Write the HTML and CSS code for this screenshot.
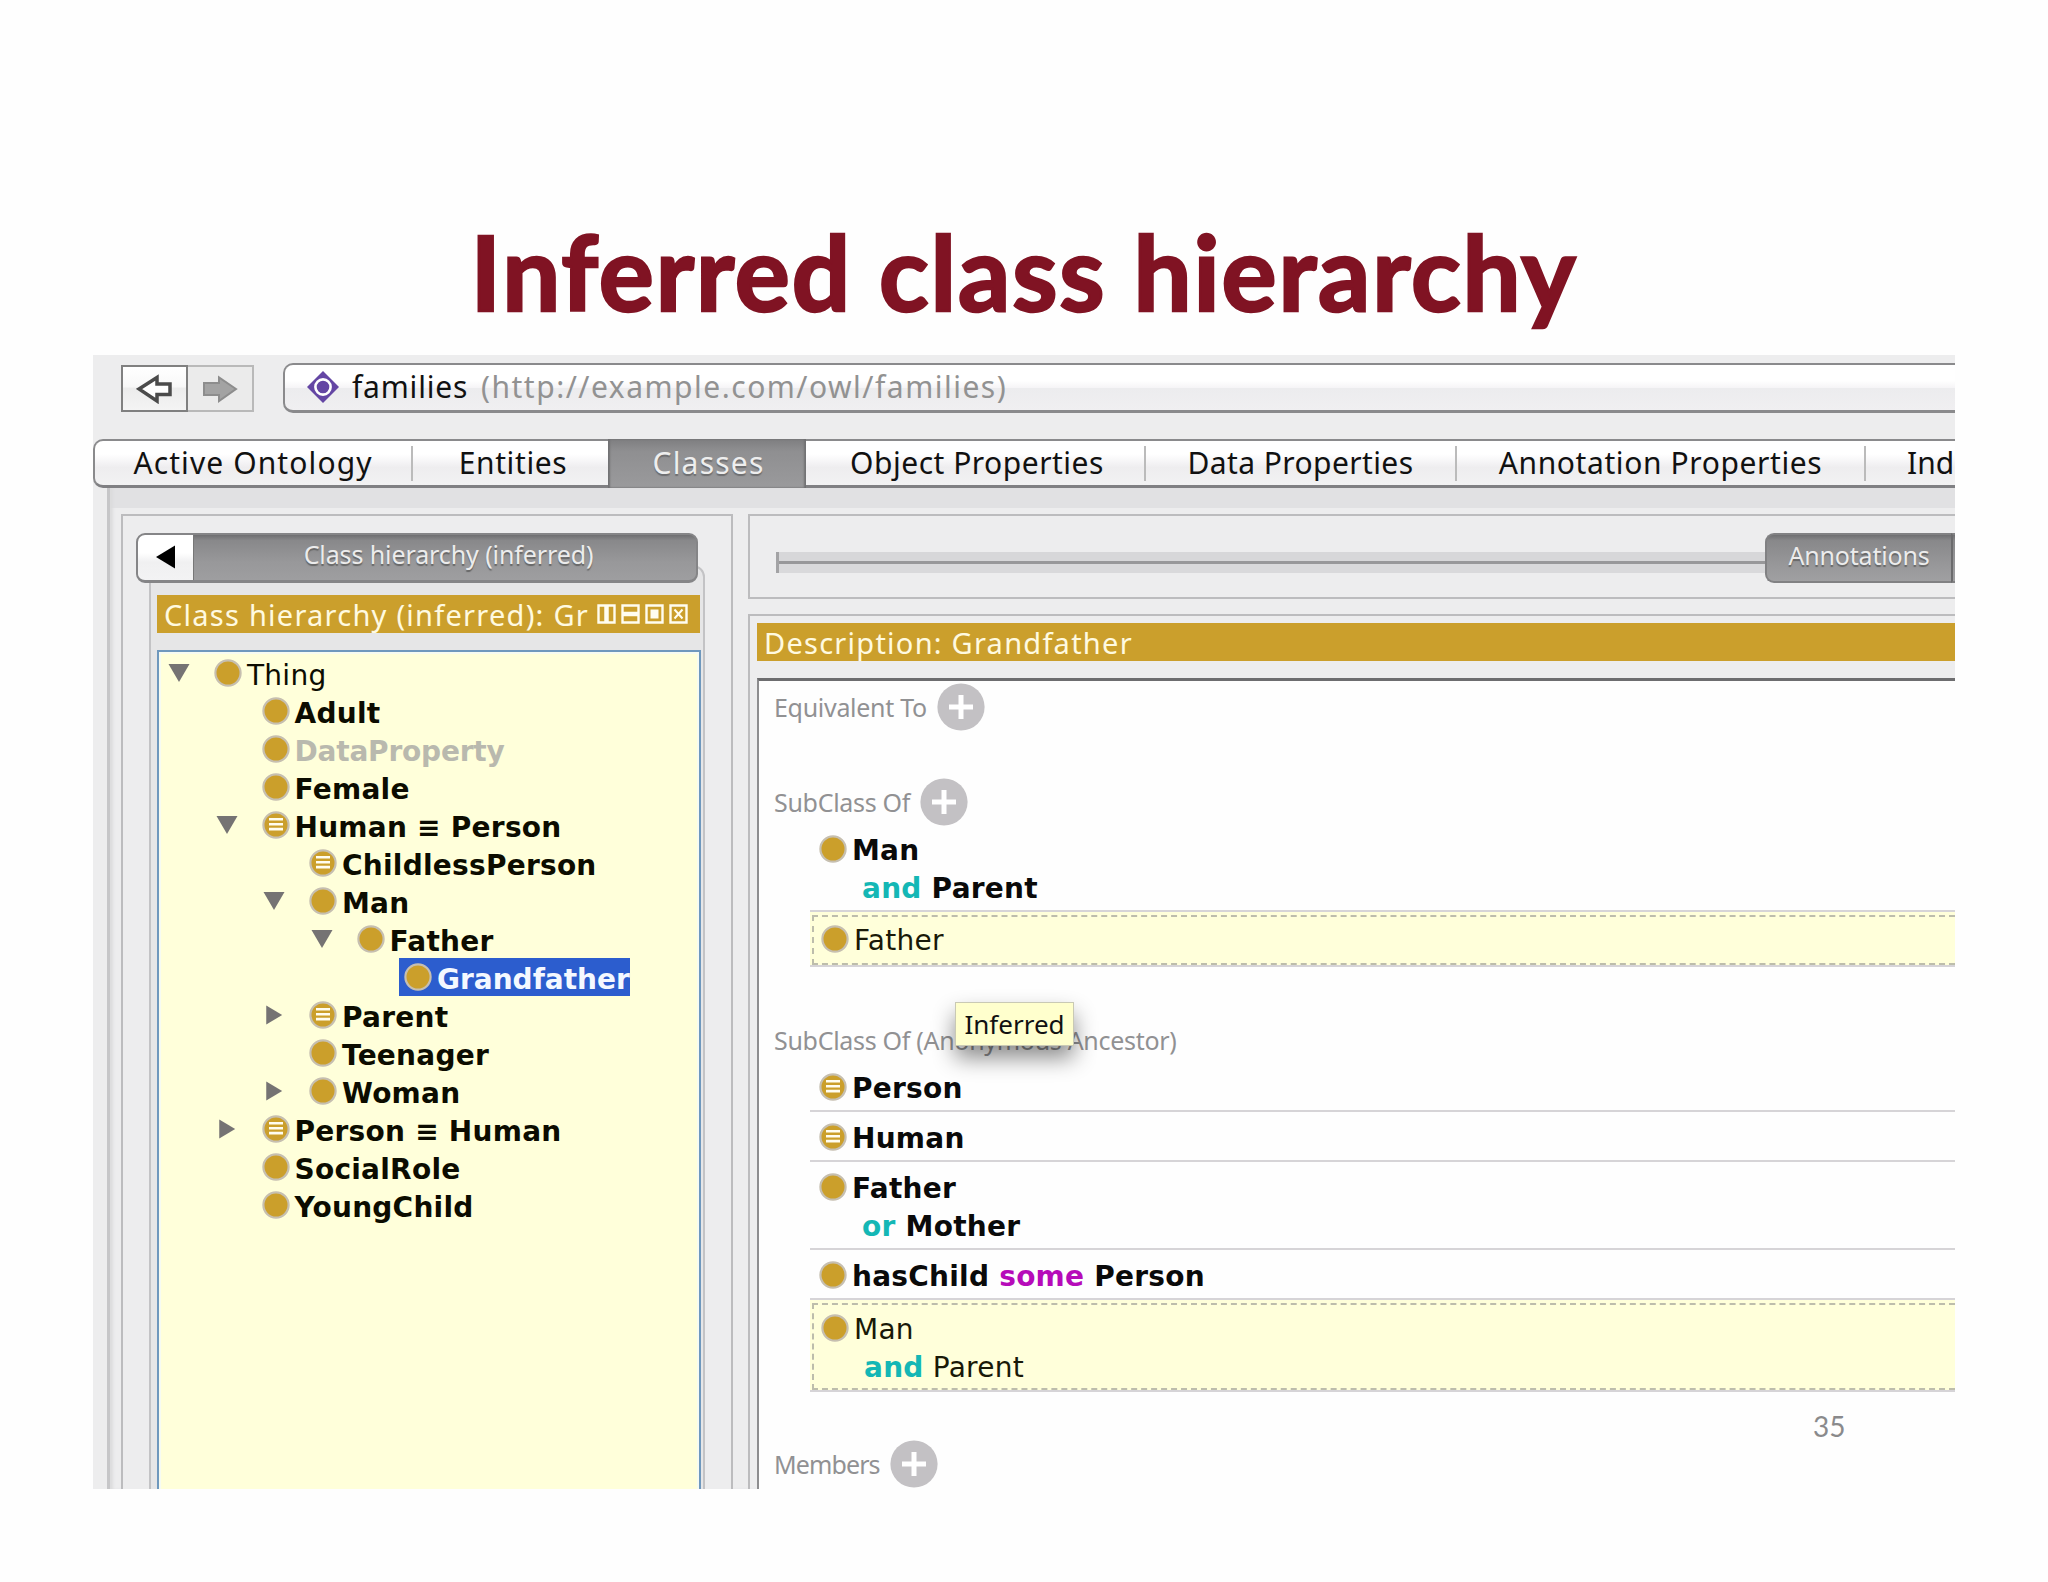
FILE: index.html
```html
<!DOCTYPE html>
<html lang="en">
<head>
<meta charset="utf-8">
<title>Inferred class hierarchy</title>
<link rel="stylesheet" href="styles.css">
</head>
<body>
<svg class="defs" aria-hidden="true">
  <symbol id="cls" viewBox="0 0 28 28"><circle cx="14" cy="14" r="12.6" fill="#cb9f2b" stroke="#c6bfb0" stroke-width="2.2"/></symbol>
  <symbol id="eqv" viewBox="0 0 28 28"><circle cx="14" cy="14" r="12.6" fill="#cb9f2b" stroke="#c6bfb0" stroke-width="2.2"/><path d="M7 8.3h14M7 13.2h14M7 18.1h14" stroke="#fffdf0" stroke-width="2.6"/></symbol>
  <symbol id="open" viewBox="0 0 22 20"><path d="M0.5 1h21L11 19z" fill="#757373"/></symbol>
  <symbol id="shut" viewBox="0 0 22 22"><path d="M2.5 0.5v21L20 11z" fill="#757373"/></symbol>
  <symbol id="plus" viewBox="0 0 48 48"><circle cx="24" cy="24" r="23.6" fill="#c3c1c4"/><path d="M24 12v24M12 24h24" stroke="#fff" stroke-width="5"/></symbol>
</svg>
<main class="slide">
  <h1 class="title">Inferred class hierarchy</h1>
  <section class="shot">
    <div class="toolbar">
      <div class="nav">
        <span class="nav-btn back"><svg width="38" height="30" viewBox="0 0 38 30"><path d="M3 15L21 3.500V10H34V20.500H21V27z" fill="#fff" stroke="#4b4b4b" stroke-width="3.500"/></svg></span>
        <span class="nav-btn fwd"><svg width="38" height="30" viewBox="0 0 38 30"><path d="M35 15L18 3.500V9H3V21H18V27z" fill="#a3a3a3" stroke="#8d8d8d" stroke-width="2"/></svg></span>
      </div>
      <div class="address">
        <svg class="gem" width="34" height="34" viewBox="0 0 34 34"><path d="M17 1L33 17L17 33L1 17z" fill="#6446a4"/><circle cx="17" cy="17" r="7.600" fill="none" stroke="#fff" stroke-width="2.600"/></svg>
        <span class="onto">families</span><span class="iri">(http://example.com/owl/families)</span>
      </div>
    </div>
    <nav class="tabs">
      <span class="tab t1">Active Ontology</span><i class="sep"></i>
      <span class="tab t2">Entities</span>
      <span class="tab t3 on">Classes</span>
      <span class="tab t4">Object Properties</span><i class="sep"></i>
      <span class="tab t5">Data Properties</span><i class="sep"></i>
      <span class="tab t6">Annotation Properties</span><i class="sep"></i>
      <span class="tab t7">Ind</span>
    </nav>
    <div class="workspace">
      <section class="left">
        <div class="seg">
          <span class="seg-back"><svg width="20" height="24" viewBox="0 0 20 24"><path d="M0 12L19 0.500v23z" fill="#000"/></svg></span>
          <span class="seg-label">Class hierarchy (inferred)</span>
        </div>
        <div class="frame">
          <div class="bar">
            <span class="bar-text">Class hierarchy (inferred): Gr</span>
            <svg class="ctl" width="92" height="20" viewBox="0 0 92 20" fill="none" stroke="#fffdf0" stroke-width="2.400">
              <path d="M1.500 1.500h16v17h-16zM25.500 1.500h16v17h-16zM49.500 1.500h16v17h-16zM73.500 1.500h16v17h-16z"/>
              <path d="M9.500 1v18M25 10h17" stroke-width="4.500"/><path d="M53.500 5.500h8v9h-8z" fill="#fffdf0" stroke="none"/><path d="M77.500 5.500l8 9M85.500 5.500l-8 9" stroke-width="2"/>
            </svg>
          </div>
          <div class="tree">
            <div class="row l0"><svg class="tw"><use href="#open"/></svg><span class="node plain"><svg class="ic"><use href="#cls"/></svg><b>Thing</b></span></div>
            <div class="row l1"><i class="tw"></i><span class="node"><svg class="ic"><use href="#cls"/></svg><b>Adult</b></span></div>
            <div class="row l1"><i class="tw"></i><span class="node dim"><svg class="ic"><use href="#cls"/></svg><b>DataProperty</b></span></div>
            <div class="row l1"><i class="tw"></i><span class="node"><svg class="ic"><use href="#cls"/></svg><b>Female</b></span></div>
            <div class="row l1"><svg class="tw"><use href="#open"/></svg><span class="node"><svg class="ic"><use href="#eqv"/></svg><b>Human ≡ Person</b></span></div>
            <div class="row l2"><i class="tw"></i><span class="node"><svg class="ic"><use href="#eqv"/></svg><b>ChildlessPerson</b></span></div>
            <div class="row l2"><svg class="tw"><use href="#open"/></svg><span class="node"><svg class="ic"><use href="#cls"/></svg><b>Man</b></span></div>
            <div class="row l3"><svg class="tw"><use href="#open"/></svg><span class="node"><svg class="ic"><use href="#cls"/></svg><b>Father</b></span></div>
            <div class="row l4"><i class="tw"></i><span class="node sel"><svg class="ic"><use href="#cls"/></svg><b>Grandfather</b></span></div>
            <div class="row l2"><svg class="tw"><use href="#shut"/></svg><span class="node"><svg class="ic"><use href="#eqv"/></svg><b>Parent</b></span></div>
            <div class="row l2"><i class="tw"></i><span class="node"><svg class="ic"><use href="#cls"/></svg><b>Teenager</b></span></div>
            <div class="row l2"><svg class="tw"><use href="#shut"/></svg><span class="node"><svg class="ic"><use href="#cls"/></svg><b>Woman</b></span></div>
            <div class="row l1"><svg class="tw"><use href="#shut"/></svg><span class="node"><svg class="ic"><use href="#eqv"/></svg><b>Person ≡ Human</b></span></div>
            <div class="row l1"><i class="tw"></i><span class="node"><svg class="ic"><use href="#cls"/></svg><b>SocialRole</b></span></div>
            <div class="row l1"><i class="tw"></i><span class="node"><svg class="ic"><use href="#cls"/></svg><b>YoungChild</b></span></div>
          </div>
        </div>
      </section>
      <div class="right">
        <section class="views">
          <span class="groove"></span>
          <span class="ann">Annotations</span><span class="ann-next"></span>
        </section>
        <section class="desc">
          <div class="bar"><span class="bar-text">Description: Grandfather</span></div>
          <div class="sheet">
            <div class="head">Equivalent To<svg class="plus"><use href="#plus"/></svg></div>
            <div class="head h2">SubClass Of<svg class="plus"><use href="#plus"/></svg></div>
            <div class="item first">
              <div class="ln"><svg class="ic"><use href="#cls"/></svg><b>Man</b></div>
              <div class="ln in"><b><em class="kw">and</em> Parent</b></div>
            </div>
            <div class="item inferred"><div class="dash">
              <div class="ln"><svg class="ic"><use href="#cls"/></svg><b>Father</b></div>
            </div></div>
            <div class="head h3">SubClass Of (Anonymous Ancestor)</div>
            <div class="item first"><div class="ln"><svg class="ic"><use href="#eqv"/></svg><b>Person</b></div></div>
            <div class="item"><div class="ln"><svg class="ic"><use href="#eqv"/></svg><b>Human</b></div></div>
            <div class="item">
              <div class="ln"><svg class="ic"><use href="#cls"/></svg><b>Father</b></div>
              <div class="ln in"><b><em class="kw">or</em> Mother</b></div>
            </div>
            <div class="item"><div class="ln"><svg class="ic"><use href="#cls"/></svg><b>hasChild <em class="some">some</em> Person</b></div></div>
            <div class="item inferred two"><div class="dash">
              <div class="ln"><svg class="ic"><use href="#cls"/></svg><b>Man</b></div>
              <div class="ln in"><b><em class="kw">and</em> Parent</b></div>
            </div></div>
            <div class="head h4">Members<svg class="plus"><use href="#plus"/></svg></div>
          </div>
        </section>
      </div>
    </div>
    <div class="tip">Inferred</div>
    <div class="pageno">35</div>
  </section>
</main>
</body>
</html>
```
FILE: styles.css
```css
* { box-sizing: border-box; }
body { margin: 0; background: #fefefe; font-family: "Noto Sans", "Open Sans", sans-serif; color: #111; }
.defs { display: none; }
svg { display: block; flex: none; }
.slide { width: 2048px; height: 1582px; overflow: hidden; padding-top: 200px; }
.title { margin: 0; height: 155px; text-align: center; font: 700 103px/143px Lato, sans-serif; letter-spacing: 1.9px; -webkit-text-stroke: 2.5px #801323; color: #801323; }
.shot { position: relative; margin-left: 93px; width: 1862px; height: 1134px; overflow: hidden; background: #ededee; }

.toolbar { height: 84px; padding: 8px 0 0 28px; display: flex; align-items: flex-start; }
.nav { display: flex; margin-top: 2px; width: 133px; height: 47px; }
.nav-btn { display: flex; align-items: center; justify-content: center; width: 67px; border: 2px solid #808080; background: linear-gradient(#fff, #f8f8f8 45%, #ececec 50%, #f4f4f4); }
.nav-btn.fwd { width: 66px; border: 2px solid #b9b9b9; border-left: 0; background: #ebebeb; }
.address { flex: 1; display: flex; align-items: center; height: 50px; margin-left: 29px; padding: 0 0 2px 21px; border: 2px solid #8a8a8c; border-right: 0; border-bottom-width: 3px; border-radius: 10px 0 0 10px; background: linear-gradient(#fff 35%, #f6f5f7 50%, #ececee 52%, #f0eff1); font-size: 30px; white-space: nowrap; }
.onto { margin-left: 12px; width: 129px; letter-spacing: 0.800px; color: #111; }
.iri { color: #929292; letter-spacing: 1.500px; }

.tabs { display: flex; align-items: center; height: 49px; border: 2px solid #8a8a8c; border-right: 0; border-bottom: 3px solid #808083; border-radius: 10px 0 0 10px; background: linear-gradient(#fff 30%, #f4f3f5 50%, #eeedef 60%, #f2f2f3); font-size: 30px; }
.tab { flex: none; height: 45px; line-height: 44px; text-align: center; letter-spacing: 0.600px; white-space: nowrap; }
.sep { flex: none; width: 2px; height: 35px; background: #bbb; }
.t1 { width: 316px; letter-spacing: 1.100px; }
.t2 { width: 195px; padding-left: 5px; }
.t3 { width: 198px; padding-left: 3px; letter-spacing: 1.200px; }
.t4 { width: 338px; padding-left: 4px; letter-spacing: 0.500px; }
.t5 { width: 309px; letter-spacing: 0.400px; }
.t6 { width: 407px; }
.t7 { padding-left: 41px; letter-spacing: 0; }
.on { background: linear-gradient(#7e7e80, #8f8f91 25%, #9a9a9c); color: #eee; text-shadow: 0 2px 1px #6d6d6f; box-shadow: inset 2px 0 2px #717173, inset -2px 0 2px #717173; height: 49px; line-height: 47px; }

.workspace { display: flex; gap: 15px; height: 1001px; margin-left: 14px; padding: 26px 0 0 11px; border-left: 3px solid #c6c6c8; background: linear-gradient(#e1e1e3 20px, #ededee 20px); box-shadow: inset 4px 0 3px -1px #dcdcdd; }
.left { flex: none; width: 612px; height: 980px; border: 2px solid #bcbcbe; background: #ededee; }
.seg { position: relative; display: flex; width: 562px; height: 50px; margin: 17px 0 0 13px; border-radius: 9px; overflow: hidden; border: 2px solid #858587; border-bottom-width: 3px; background: linear-gradient(#6f6f71, #88888a 12%, #98989a 60%, #9e9ea0); font-size: 25px; }
.seg-back { display: flex; align-items: center; width: 56px; padding-left: 18px; padding-bottom: 2px; background: linear-gradient(#fff 40%, #f0f0f1 60%, #f3f3f4); border-right: 1px solid #777; }
.seg-label { flex: 1; padding-left: 7px; text-align: center; line-height: 38px; letter-spacing: -0.100px; color: #ececec; text-shadow: 0 2px 1px #666; }
.frame { width: 556px; height: 926px; margin: -18px 0 0 26px; padding: 28px 0 0 6px; border: 2px solid #c3c3c5; border-radius: 0 12px 0 0; background: #e6e6e7; }
.bar { display: flex; align-items: center; height: 38px; padding-left: 7px; background: #cb9f2c; color: #fffae0; font-size: 29px; white-space: nowrap; }
.bar-text { letter-spacing: 1.250px; line-height: 39px; height: 38px; }
.frame .bar { width: 543px; }
.ctl { margin-left: 8px; }
.tree { width: 544px; height: 860px; margin-top: 17px; padding-top: 2px; border: 2px solid #6f98bd; background: #ffffda; box-shadow: inset 0 0 0 2px #f6fbf2; }

.row { display: flex; align-items: center; height: 38px; }
.l1 { padding-left: 47.500px; }
.l2 { padding-left: 95px; }
.l3 { padding-left: 142.500px; }
.l4 { padding-left: 190px; }
.tw { width: 22px; height: 20px; margin: 0 19px 0 9px; }
.node { display: flex; align-items: center; height: 38px; padding-left: 5px; }
.ic { width: 28px; height: 28px; }
.node b, .ln b { font: 700 28px/38px "DejaVu Sans", sans-serif; letter-spacing: 0.250px; white-space: nowrap; }
.node b { margin-left: 5px; padding-top: 5px; color: #0c0c00; }
.plain b { font-weight: 400; }
.node.dim b { color: #b9b9ae; letter-spacing: -0.200px; }
.node.sel { background: #2c5dce; }
.node.sel b { color: #f4f8ff; letter-spacing: 0; }

.right { flex: 1; min-width: 0; display: flex; flex-direction: column; gap: 15px; }
.views { display: flex; flex: none; height: 85px; padding: 17px 0 0 26px; border: 2px solid #bcbcbe; border-right: 0; }
.groove { flex: none; width: 989px; height: 21px; margin-top: 19px; border-left: 3px solid #a3a3a5; background: linear-gradient(#d7d7d9 9px, #98989a 9px, #98989a 11.500px, #d9d9db 11.500px); }
.ann, .ann-next { flex: none; height: 50px; background: linear-gradient(#6f6f71, #88888a 12%, #969698 60%, #a0a0a2); border: 2px solid #818183; border-right: 0; }
.ann { width: 186px; border-radius: 9px 0 0 9px; text-align: center; font-size: 25px; line-height: 40px; letter-spacing: -0.200px; color: #ececec; text-shadow: 0 2px 1px #666; }
.ann-next { width: 30px; border-left: 2px solid #6b6b6d; }

.desc { flex: 1; padding: 7px 0 0 7px; border: 2px solid #bcbcbe; border-right: 0; border-bottom: 0; }
.sheet { height: 830px; margin-top: 17px; padding-top: 1px; border-top: 3px solid #6d6d6f; border-left: 2px solid #8d8d8f; background: #fefefe; }
.head { display: flex; align-items: center; height: 48px; padding: 1px 0 0 15px; font-size: 25px; line-height: 46px; letter-spacing: -0.300px; color: #919193; white-space: nowrap; }
.plus { width: 48px; height: 48px; margin-left: 10px; }
.h2 { margin-top: 47px; }
.h3 { margin-top: 48px; }
.h4 { margin-top: 47px; letter-spacing: -0.900px; }
.item { margin-left: 51px; padding: 7px 0 3px 9px; border-bottom: 2px solid #d6d4d7; }
.item.first { padding-top: 6px; }
.ln { display: flex; align-items: center; height: 38px; }
.ln .ic { margin-bottom: 3px; }
.ln b { margin-left: 5px; padding-top: 2px; color: #0a0a0a; }
.ln.in b { margin-left: 43px; }
em { font-style: normal; font-weight: 700; }
.kw { color: #14b7b5; }
.some { color: #b60bb9; }
.item.inferred { padding: 3px 0 0 2px; background: #ffffda; }
.dash { padding: 4px 0 4px 7px; border: 2px dashed #bdbdac; border-right: 0; }
.dash b { font-weight: 400; color: #191908; }
.two .dash { padding: 5px 0 2px 7px; }

.tip { position: absolute; left: 862px; top: 647px; width: 119px; height: 44px; border: 1px solid #c9c9b4; background: #ffffcd; font-size: 26px; line-height: 42px; text-align: center; box-shadow: 0 12px 22px rgba(0,0,0,.45); }
.pageno { position: absolute; left: 1720px; top: 1052px; font: 28px/38px Lato, sans-serif; color: #8a8a8c; }
```
